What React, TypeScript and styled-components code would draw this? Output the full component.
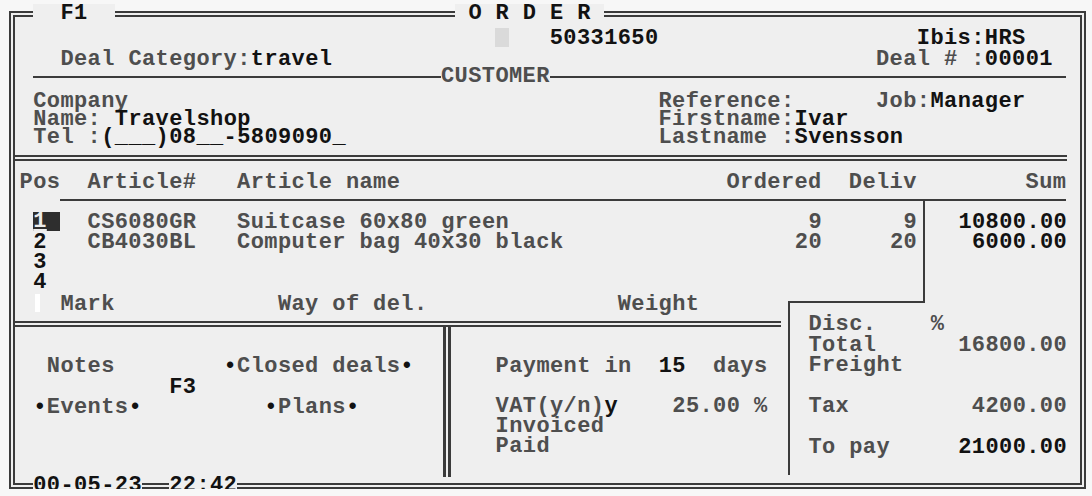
import styled, { createGlobalStyle, css } from "styled-components";

// 80 column text screen: one column is 13.6px wide
const CH = 13.6;
const SPACING = 0.4;
const INK = "#3b3b3b";
const PAPER = "#efefef";
const LABEL = "#4e4e4e";
const VALUE = "#121212";

// first track is what is left of column 0 after the frame border
const TRACKS = `4.6px repeat(78, ${CH}px)`;

const GlobalStyle = createGlobalStyle`
    html, body {
        margin: 0;
        padding: 0;
        background: #f7f7f7;
    }
    body {
        overflow: hidden;
    }
`;

const Screen = styled.div`
    padding: 11px 0 0 9px;
    font-family: "Liberation Mono", "DejaVu Sans Mono", monospace;
    font-size: 22px;
    font-weight: 700;
    letter-spacing: ${SPACING}px;
    color: ${LABEL};
`;

const Frame = styled.div`
    position: relative;
    width: 1065.4px;
    border: 6px double ${INK};
    background: ${PAPER};
`;

const BorderTag = styled.span<{ $c: number; $edge: "top" | "bottom" }>`
    position: absolute;
    ${(p) => p.$edge}: -13px;
    left: ${(p) => p.$c * CH - 9}px;
    height: 20px;
    line-height: 20px;
    background: ${PAPER};
    color: ${VALUE};
    white-space: pre;
`;

const Lines = styled.div<{ $rows: string; $cols?: string }>`
    display: grid;
    grid-template-columns: ${(p) => p.$cols ?? TRACKS};
    grid-template-rows: ${(p) => p.$rows};
    align-content: start;
    white-space: pre;
`;

// glyphs sit high in the line box, so the top padding drops them onto the row centre
const Cell = styled.span<{ $c: number; $r?: number; $w?: number; $end?: boolean }>`
    grid-row: ${(p) => p.$r ?? 1};
    grid-column: ${(p) => p.$c + 1} / span ${(p) => p.$w ?? 1};
    align-self: center;
    padding-top: 4px;
    line-height: 18px;
    min-width: 0;
    ${(p) =>
        p.$end &&
        css`
            text-align: right;
            margin-right: -${SPACING}px;
        `}
`;

const V = styled.span`
    color: ${VALUE};
`;

const Dot = styled.span`
    color: ${VALUE};
`;

const HRule = styled.i<{ $from: number; $to: number; $r?: number }>`
    grid-row: ${(p) => p.$r ?? 1};
    grid-column: ${(p) => p.$from + 1} / ${(p) => p.$to + 1};
    align-self: center;
    height: 2px;
    background: ${INK};
`;

const Legend = styled(Cell)`
    padding-top: 0;
    line-height: 16px;
    background: ${PAPER};
`;

const Ghost = styled.i<{ $c: number }>`
    grid-row: 1;
    grid-column: ${(p) => p.$c + 1};
    align-self: center;
    height: 19px;
    background: #dadada;
`;

const Cursor = styled(Cell)`
    height: 19px;
    padding-top: 0;
    line-height: 20px;
    background: #2e2e2e;
    color: #ececec;
`;

const Caret = styled.i<{ $c: number }>`
    grid-row: 1;
    grid-column: ${(p) => p.$c + 1};
    align-self: center;
    width: 5px;
    height: 18px;
    margin-left: 2px;
    background: #ffffff;
`;

const Header = styled(Lines)`
    padding-top: 10px;
`;

const Customer = styled(Lines)`
    padding-top: 5px;
`;

const DoubleRule = styled.div`
    margin: 10px ${CH}px 0 0;
    border-top: 6px double ${INK};
`;

const TableHead = styled(Lines)`
    padding-top: 11px;
`;

const Lower = styled.div`
    display: grid;
    grid-template-columns: 773px 137px minmax(0, 1fr);
    grid-template-rows: 91px 185px;
    padding-bottom: 6px;
`;

const Items = styled(Lines)`
    grid-column: 1 / 3;
    grid-row: 1;
    margin-bottom: -11px;
    padding-top: 10px;
    border-right: 2px solid ${INK};
`;

const Sums = styled.div`
    grid-column: 3;
    grid-row: 1;
    display: grid;
    grid-auto-rows: 20px;
    align-content: start;
    padding: 12px ${CH - SPACING}px 0 0;
    text-align: right;
    line-height: 20px;
    color: ${VALUE};
`;

const StepRule = styled.i`
    grid-column: 2;
    grid-row: 2;
    align-self: start;
    margin-top: 9px;
    height: 2px;
    background: ${INK};
`;

const Totals = styled(Lines)`
    grid-column: 2 / 4;
    grid-row: 2;
    margin: 9px 0 2px;
    padding: 12px 0 0 18.4px;
    border-left: 2px solid ${INK};
`;

const Desk = styled.div`
    grid-column: 1;
    grid-row: 2;
    display: flex;
    flex-direction: column;
`;

const MarkRow = styled(Lines)`
    margin-right: 7px;
    padding-bottom: 7px;
    border-bottom: 6px double ${INK};
`;

const Panels = styled.div`
    display: flex;
    height: 150px;
`;

const NotesPanel = styled(Lines)`
    flex: none;
    width: 428px;
    min-width: 0;
    padding-top: 28px;
`;

const PayPanel = styled(Lines)`
    flex: 1;
    min-width: 0;
    padding: 28px 0 0 44.6px;
    border-left: 8px double ${INK};
`;

const orderLines = [
    { pos: "1", art: "CS6080GR", name: "Suitcase 60x80 green", ordered: "9", deliv: "9", sum: "10800.00" },
    { pos: "2", art: "CB4030BL", name: "Computer bag 40x30 black", ordered: "20", deliv: "20", sum: "6000.00" },
    { pos: "3" },
    { pos: "4" },
];

export default function App() {
    return (
        <>
            <GlobalStyle />
            <Screen>
                <Frame>
                    <BorderTag $edge="top" $c={2}>{"  F1  "}</BorderTag>
                    <BorderTag $edge="top" $c={33}>{" O R D E R "}</BorderTag>
                    <BorderTag $edge="bottom" $c={2}>00-05-23</BorderTag>
                    <BorderTag $edge="bottom" $c={12}>22:42</BorderTag>

                    <Header $rows="20px 21px 18px">
                        <Ghost $c={36} />
                        <Cell $c={40}><V>50331650</V></Cell>
                        <Cell $c={67}><V>Ibis:HRS</V></Cell>
                        <Cell $r={2} $c={4}>Deal Category:<V>travel</V></Cell>
                        <Cell $r={2} $c={64}>Deal # :<V>00001</V></Cell>
                        <HRule $r={3} $from={2} $to={78} />
                        <Legend $r={3} $c={32} $w={8}>CUSTOMER</Legend>
                    </Header>

                    <Customer $rows="repeat(3, 18px)">
                        <Cell $c={2}>Company</Cell>
                        <Cell $c={48}>Reference:</Cell>
                        <Cell $c={64}>Job:<V>Manager</V></Cell>
                        <Cell $r={2} $c={2}>Name: <V>Travelshop</V></Cell>
                        <Cell $r={2} $c={48}>Firstname:<V>Ivar</V></Cell>
                        <Cell $r={3} $c={2}>Tel :<V>(___)08__-5809090_</V></Cell>
                        <Cell $r={3} $c={48}>Lastname :<V>Svensson</V></Cell>
                    </Customer>

                    <DoubleRule />

                    <TableHead $rows="18px 9px 2px">
                        <Cell $c={1}>Pos</Cell>
                        <Cell $c={6}>Article#</Cell>
                        <Cell $c={17}>Article name</Cell>
                        <Cell $c={53}>Ordered</Cell>
                        <Cell $c={62}>Deliv</Cell>
                        <Cell $c={75}>Sum</Cell>
                        <HRule $r={3} $from={4} $to={78} />
                    </TableHead>

                    <Lower>
                        <Items $rows="repeat(4, 20px)">
                            {orderLines.map((line, i) => (
                                <>
                                    {i === 0 ? (
                                        <Cursor key={`p${i}`} $r={i + 1} $c={2} $w={2}>
                                            <u>{line.pos}</u>
                                        </Cursor>
                                    ) : (
                                        <Cell key={`p${i}`} $r={i + 1} $c={2}><V>{line.pos}</V></Cell>
                                    )}
                                    {line.art && <Cell key={`a${i}`} $r={i + 1} $c={6}>{line.art}</Cell>}
                                    {line.name && <Cell key={`n${i}`} $r={i + 1} $c={17}>{line.name}</Cell>}
                                    {line.ordered && (
                                        <Cell key={`o${i}`} $r={i + 1} $c={53} $w={7} $end>{line.ordered}</Cell>
                                    )}
                                    {line.deliv && (
                                        <Cell key={`d${i}`} $r={i + 1} $c={62} $w={5} $end>{line.deliv}</Cell>
                                    )}
                                </>
                            ))}
                        </Items>

                        <Sums>
                            {orderLines.filter((l) => l.sum).map((l) => (
                                <span key={l.pos}>{l.sum}</span>
                            ))}
                        </Sums>

                        <StepRule />

                        <Desk>
                            <MarkRow $rows="22px">
                                <Caret $c={2} />
                                <Cell $c={4}>Mark</Cell>
                                <Cell $c={20}>Way of del.</Cell>
                                <Cell $c={45}>Weight</Cell>
                            </MarkRow>
                            <Panels>
                                <NotesPanel $rows="20px 21px 20px">
                                    <Cell $c={3}>Notes</Cell>
                                    <Cell $c={16}><Dot>•</Dot>Closed deals<Dot>•</Dot></Cell>
                                    <Cell $r={2} $c={12}><V>F3</V></Cell>
                                    <Cell $r={3} $c={2}><Dot>•</Dot>Events<Dot>•</Dot></Cell>
                                    <Cell $r={3} $c={19}><Dot>•</Dot>Plans<Dot>•</Dot></Cell>
                                </NotesPanel>
                                <PayPanel $rows="repeat(5, 20px)" $cols={`repeat(21, ${CH}px)`}>
                                    <Cell $c={0}>Payment in</Cell>
                                    <Cell $c={12}><V>15</V></Cell>
                                    <Cell $c={16}>days</Cell>
                                    <Cell $r={3} $c={0}>VAT(y/n)<V>y</V></Cell>
                                    <Cell $r={3} $c={13}>25.00 %</Cell>
                                    <Cell $r={4} $c={0}>Invoiced</Cell>
                                    <Cell $r={5} $c={0}>Paid</Cell>
                                </PayPanel>
                            </Panels>
                        </Desk>

                        <Totals $rows="repeat(7, 20.5px)" $cols={`repeat(19, ${CH}px)`}>
                            <Cell $c={0}>Disc.</Cell>
                            <Cell $c={9}>%</Cell>
                            <Cell $r={2} $c={0}>Total</Cell>
                            <Cell $r={2} $c={10} $w={9} $end>16800.00</Cell>
                            <Cell $r={3} $c={0}>Freight</Cell>
                            <Cell $r={5} $c={0}>Tax</Cell>
                            <Cell $r={5} $c={10} $w={9} $end>4200.00</Cell>
                            <Cell $r={7} $c={0}>To pay</Cell>
                            <Cell $r={7} $c={10} $w={9} $end><V>21000.00</V></Cell>
                        </Totals>
                    </Lower>
                </Frame>
            </Screen>
        </>
    );
}
